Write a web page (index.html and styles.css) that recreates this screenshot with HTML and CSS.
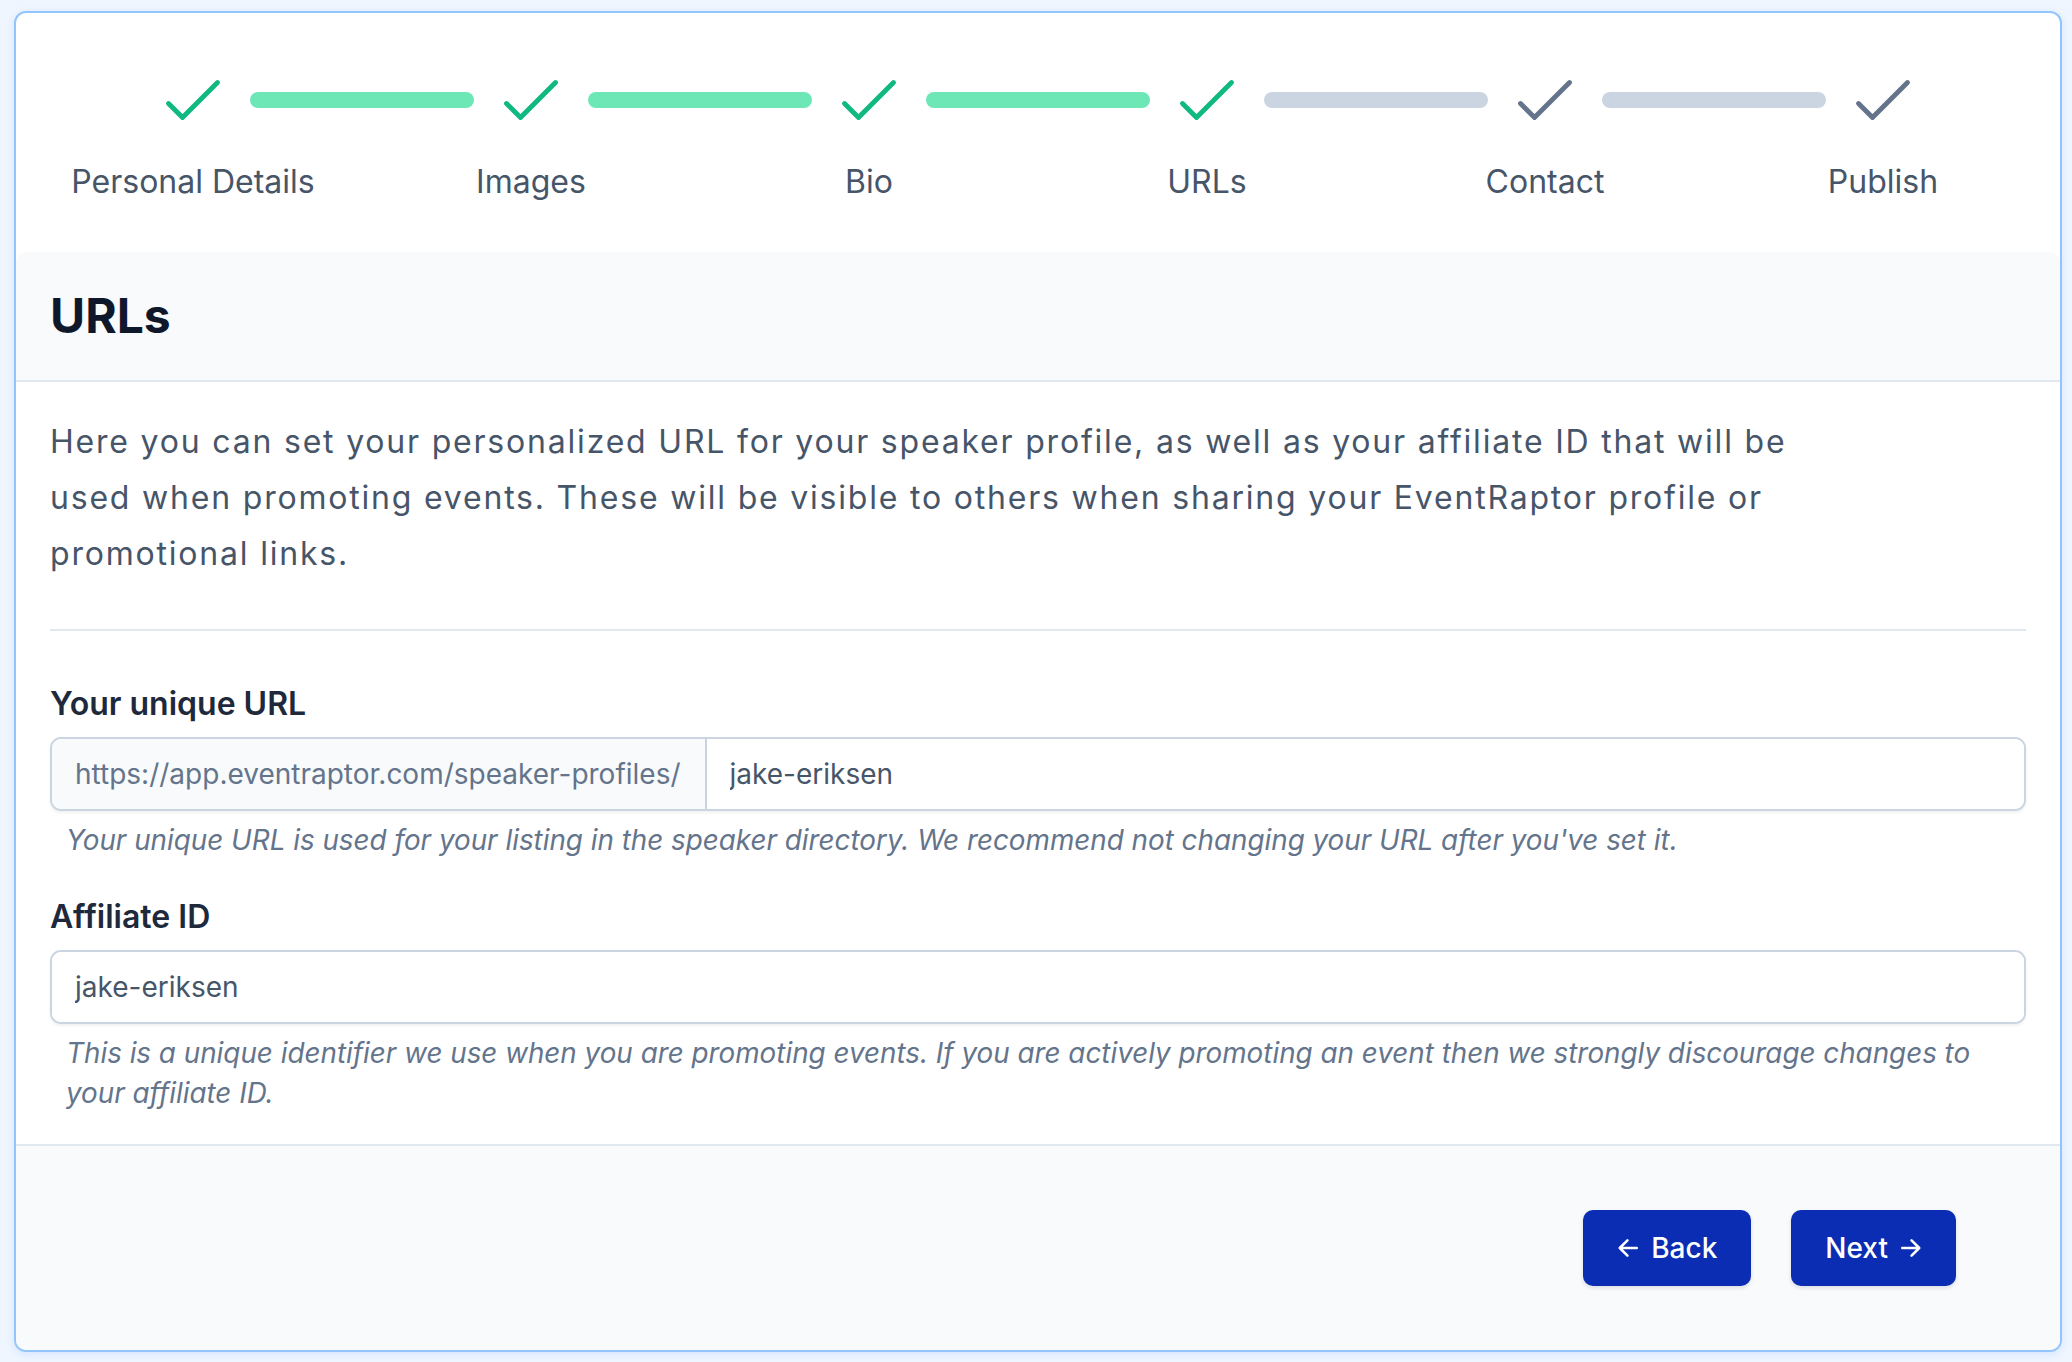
FILE: index.html
```html
<!DOCTYPE html>
<html lang="en">
<head>
<meta charset="utf-8">
<title>URLs</title>
<link rel="stylesheet" href="styles.css">
</head>
<body>
<div class="page">
  <div class="card">
    <div class="stepper">
      <div class="track">
        <svg class="check done" viewBox="0 0 24 24"><path d="M5 13l4 4L19 7"/></svg>
        <div class="bar done"></div>
        <svg class="check done" viewBox="0 0 24 24"><path d="M5 13l4 4L19 7"/></svg>
        <div class="bar done"></div>
        <svg class="check done" viewBox="0 0 24 24"><path d="M5 13l4 4L19 7"/></svg>
        <div class="bar done"></div>
        <svg class="check done" viewBox="0 0 24 24"><path d="M5 13l4 4L19 7"/></svg>
        <div class="bar"></div>
        <svg class="check" viewBox="0 0 24 24"><path d="M5 13l4 4L19 7"/></svg>
        <div class="bar"></div>
        <svg class="check" viewBox="0 0 24 24"><path d="M5 13l4 4L19 7"/></svg>
      </div>
      <div class="labels">
        <span>Personal Details</span>
        <span>Images</span>
        <span>Bio</span>
        <span>URLs</span>
        <span>Contact</span>
        <span>Publish</span>
      </div>
    </div>

    <div class="header">
      <h1>URLs</h1>
    </div>

    <div class="body">
      <p class="intro">Here you can set your personalized URL for your speaker profile, as well as your affiliate ID that will be used when promoting events. These will be visible to others when sharing your EventRaptor profile or promotional links.</p>
      <div class="divider"></div>

      <div class="field">
        <label class="label" for="url">Your unique URL</label>
        <div class="input-group">
          <span class="prefix">https://app.eventraptor.com/speaker-profiles/</span>
          <input class="input" id="url" type="text" value="jake-eriksen">
        </div>
        <p class="help">Your unique URL is used for your listing in the speaker directory. We recommend not changing your URL after you've set it.</p>
      </div>

      <div class="field second">
        <label class="label" for="aff">Affiliate ID</label>
        <div class="input-group">
          <input class="input" id="aff" type="text" value="jake-eriksen">
        </div>
        <p class="help">This is a unique identifier we use when you are promoting events. If you are actively promoting an event then we strongly discourage changes to your affiliate ID.</p>
      </div>
    </div>

    <div class="footer">
      <button class="btn" type="button">
        <svg class="arrow" viewBox="0 0 20 20"><path d="M18 10H2.5M9.5 3l-7 7 7 7"/></svg>
        <span>Back</span>
      </button>
      <button class="btn" type="button">
        <span>Next</span>
        <svg class="arrow" viewBox="0 0 20 20"><path d="M2 10h15.5M10.5 3l7 7-7 7"/></svg>
      </button>
    </div>
  </div>
</div>
</body>
</html>
```

FILE: styles.css
```css
* {
  box-sizing: border-box;
}

html, body {
  margin: 0;
  padding: 0;
  background: #eff6ff;
}

body {
  font-family: Inter, "Noto Sans", "Liberation Sans", sans-serif;
  color: #475569;
}

.page {
  padding: 11px 10px 10px 14px;
}

.card {
  background: #ffffff;
  border: 2px solid #93c5fd;
  border-radius: 12px;
  box-shadow: 0 2px 8px rgba(59, 130, 246, 0.15);
  overflow: hidden;
}

/* Stepper */
.stepper {
  padding: 45px 0 46px;
}

.track {
  display: flex;
  align-items: center;
  padding: 0 135px;
}

.check {
  width: 84px;
  height: 84px;
  flex: 0 0 84px;
  fill: none;
  stroke: #64748b;
  stroke-width: 1.4;
  stroke-linecap: round;
  stroke-linejoin: round;
}

.check.done {
  stroke: #10b981;
}

.bar {
  flex: 1 1 auto;
  height: 16px;
  margin: 0 15px;
  border-radius: 8px;
  background: #cbd5e1;
}

.bar.done {
  background: #6ee7b7;
}

.labels {
  display: grid;
  grid-template-columns: repeat(6, 1fr);
  padding: 0 8px;
  margin-top: 16px;
  text-align: center;
  font-size: 32px;
  line-height: 48px;
  color: #475569;
}

/* Header */
.header {
  background: #f8fafc;
  border-bottom: 2px solid #e2e8f0;
  border-radius: 10px 10px 0 0;
  padding: 32px 34px;
}

.header h1 {
  margin: 0;
  font-size: 48px;
  line-height: 64px;
  font-weight: 700;
  color: #0f172a;
}

/* Body */
.body {
  padding: 32px 34px 31px;
}

.intro {
  margin: 0;
  max-width: 1800px;
  font-size: 32px;
  letter-spacing: 1.8px;
  line-height: 56px;
  color: #475569;
}

.divider {
  height: 2px;
  background: #e2e8f0;
  margin: 47px 0 49px;
}

.field.second {
  margin-top: 33px;
}

.label {
  display: block;
  font-size: 32px;
  line-height: 48px;
  font-weight: 600;
  color: #1e293b;
  margin-bottom: 9px;
}

.input-group {
  display: flex;
  height: 74px;
  border: 2px solid #cbd5e1;
  border-radius: 11px;
  box-shadow: 0 2px 3px rgba(15, 23, 42, 0.06);
  overflow: hidden;
}

.prefix {
  display: flex;
  align-items: center;
  padding: 0 24px 0 23px;
  background: #f8fafc;
  border-right: 2px solid #cbd5e1;
  font-size: 28px;
  color: #64748b;
  white-space: nowrap;
}

.input {
  flex: 1 1 auto;
  min-width: 0;
  border: 0;
  outline: none;
  background: #ffffff;
  padding: 0 23px;
  font-family: inherit;
  font-size: 28px;
  color: #475569;
}

.help {
  margin: 9px 0 0;
  padding-left: 16px;
  font-size: 27.8px;
  line-height: 40px;
  font-style: italic;
  color: #64748b;
}

/* Footer */
.footer {
  display: flex;
  justify-content: flex-end;
  gap: 40px;
  background: #f8fafc;
  border-top: 2px solid #e2e8f0;
  padding: 64px 104px 64px 34px;
}

.btn {
  display: inline-flex;
  align-items: center;
  gap: 12px;
  height: 76px;
  padding: 0 34px;
  border: 0;
  border-radius: 10px;
  background: #0b2db4;
  color: #ffffff;
  font-family: inherit;
  font-size: 28px;
  font-weight: 500;
  box-shadow: 0 2px 4px rgba(15, 23, 42, 0.12);
  cursor: pointer;
}

.arrow {
  width: 22px;
  height: 22px;
  fill: none;
  stroke: #ffffff;
  stroke-width: 2.3;
  stroke-linecap: round;
  stroke-linejoin: round;
}
```
